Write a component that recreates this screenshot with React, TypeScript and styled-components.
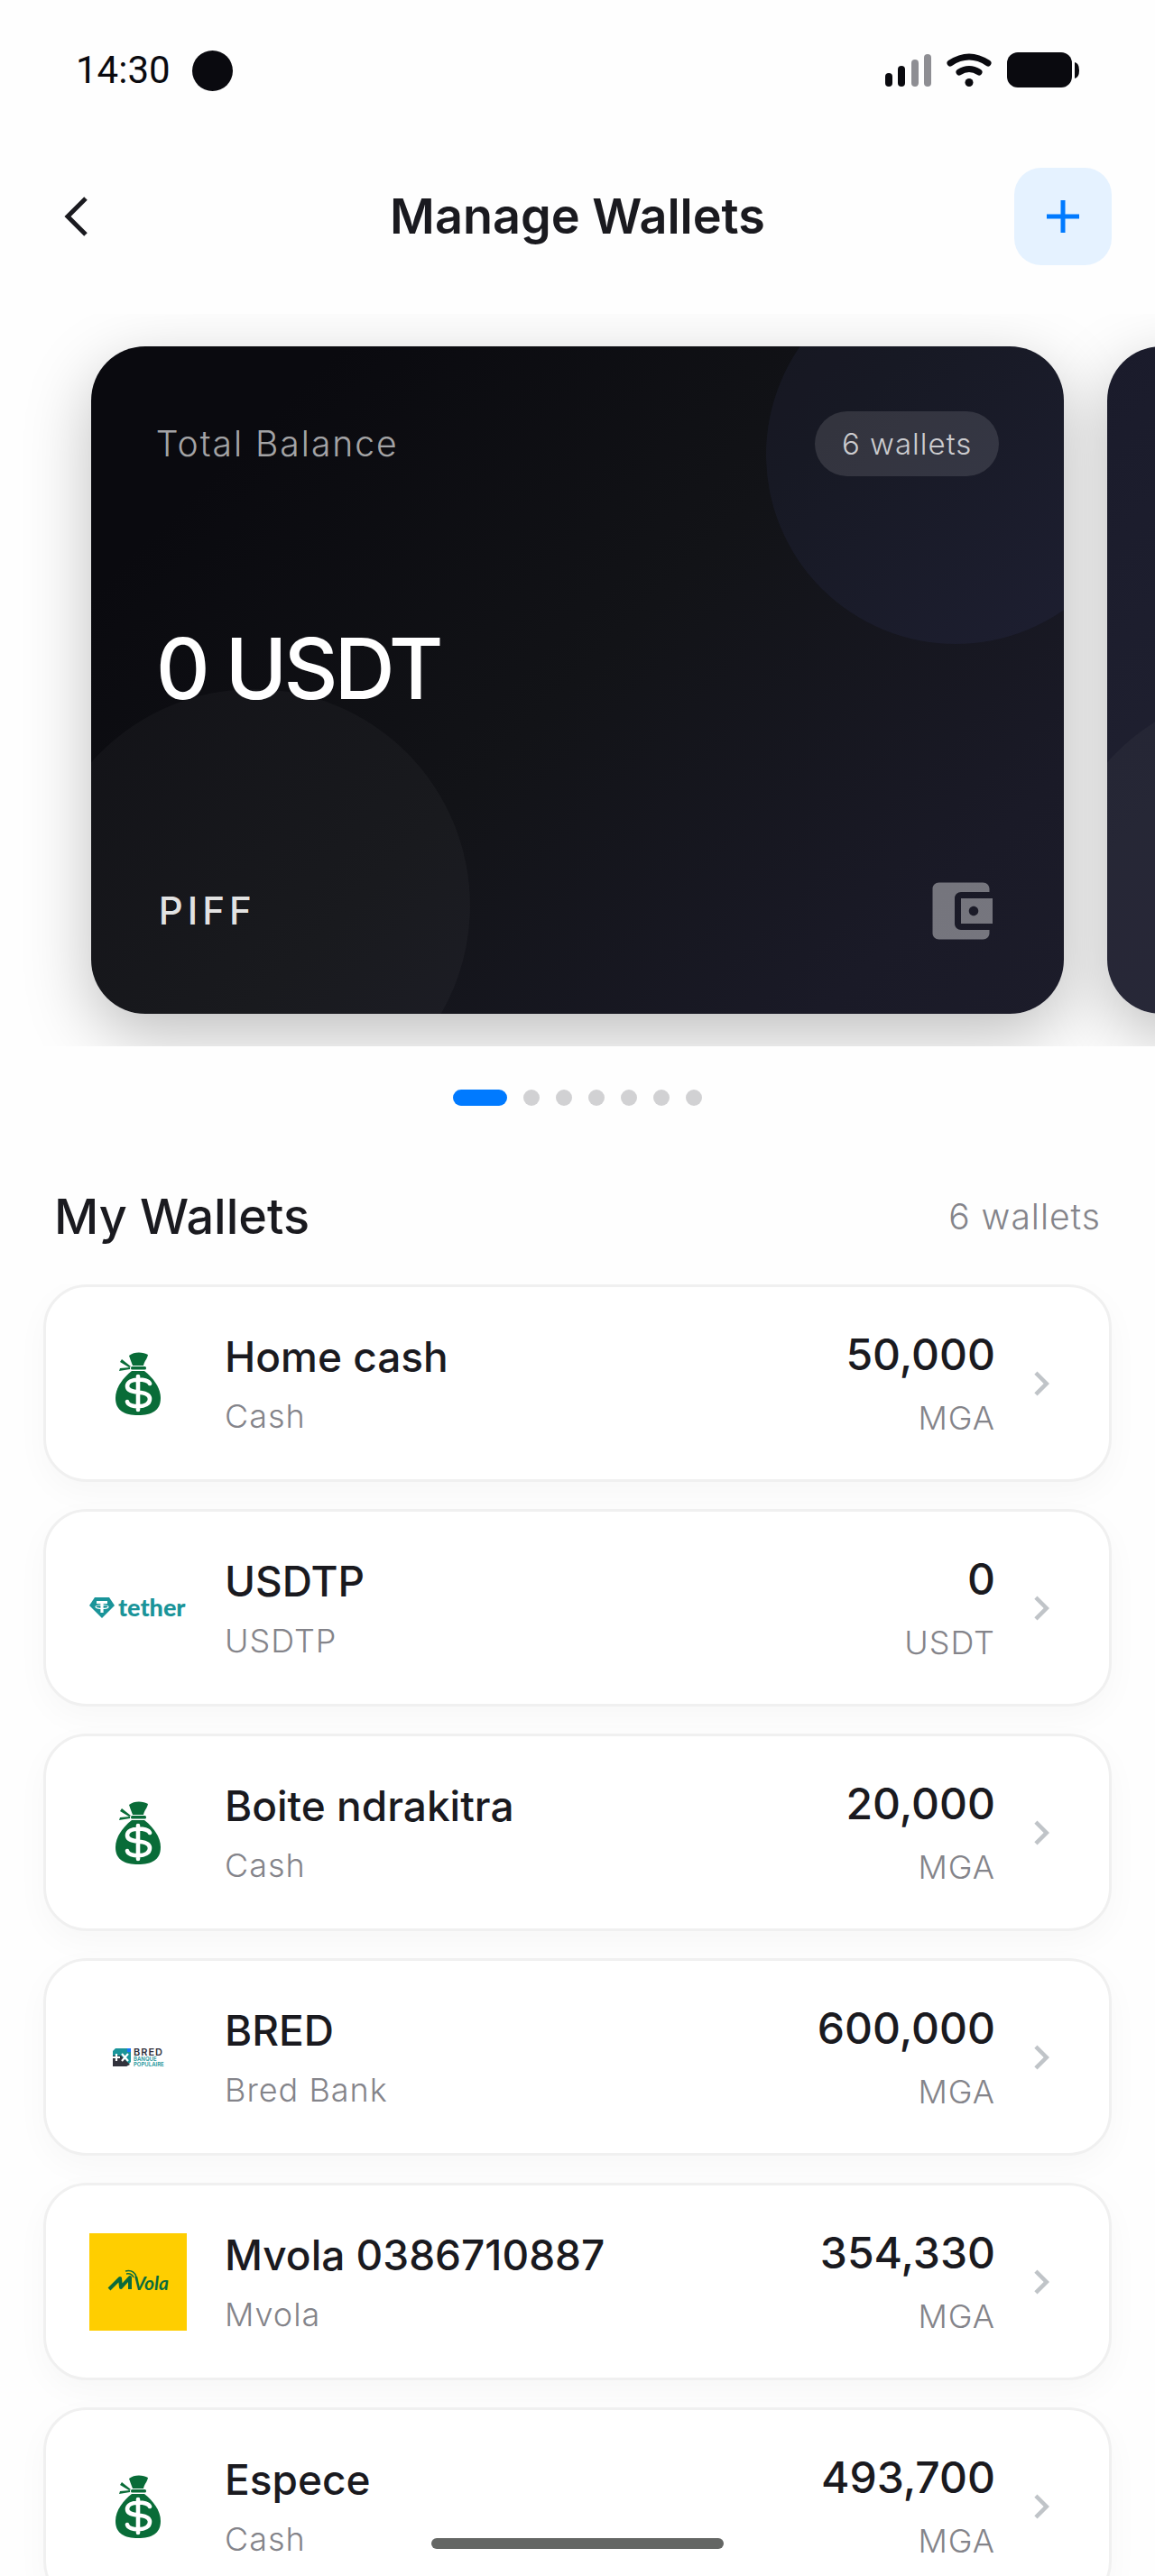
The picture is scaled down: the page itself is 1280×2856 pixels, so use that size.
import React from "react";
import styled, { createGlobalStyle, css } from "styled-components";

const GlobalStyle = createGlobalStyle`
  *, *::before, *::after { box-sizing: border-box; }
  body { margin: 0; background: #fefefe; }
  button { font: inherit; color: inherit; border: 0; padding: 0; background: none; cursor: pointer; }
`;

const Screen = styled.div`
  position: relative;
  display: flex;
  flex-direction: column;
  height: 100vh;
  overflow: hidden;
  background: #fefefe;
  color: #1a1a1f;
  font-family: Inter, "Liberation Sans", sans-serif;
`;

const StatusBar = styled.div`
  display: flex;
  align-items: center;
  justify-content: space-between;
  height: 156px;
  padding: 0 84px;
`;

const StatusGroup = styled.div`
  display: flex;
  align-items: center;
  gap: 24px;
  color: #0a0a0f;
`;

const Clock = styled.time`
  font-family: Roboto, sans-serif;
  font-size: 42px;
  line-height: 48px;
`;

const Camera = styled.span`
  width: 45px;
  height: 45px;
  border-radius: 50%;
  background: #0a0a0f;
`;

const Header = styled.header`
  display: grid;
  grid-template-columns: 108px 1fr 108px;
  align-items: center;
  padding: 30px 48px;
`;

const BackButton = styled.button`
  display: flex;
  width: 72px;
  height: 72px;
`;

const Title = styled.h1`
  margin: 0;
  font-size: 54px;
  line-height: 66px;
  font-weight: 600;
  text-align: center;
`;

const AddButton = styled.button`
  display: grid;
  place-items: center;
  width: 108px;
  height: 108px;
  border-radius: 30px;
  background: #e5f2ff;
`;

const Carousel = styled.section`
  display: flex;
  flex: none;
  margin-top: 24px;
  padding: 36px 6%;
  overflow: hidden;
`;

const Slide = styled.div`
  flex: none;
  width: 100%;
  padding: 0 24px;
`;

const BalanceCard = styled.article<{ $next?: boolean }>`
  position: relative;
  display: flex;
  flex-direction: column;
  justify-content: space-between;
  height: 740px;
  padding: 72px;
  border-radius: 60px;
  overflow: hidden;
  color: #fff;
  background: ${(p) =>
    p.$next
      ? "linear-gradient(135deg, #1a1b2b, #2a2b3a)"
      : "linear-gradient(135deg, #0a0a0f 0%, #0a0a0f 15%, #121317 50%, #1a1a27 85%, #1c1c2a 100%)"};
`;

const CardShadow = styled.div`
  border-radius: 60px;
  box-shadow: 0 24px 72px rgba(0, 0, 0, 0.25);
`;

const Bubble = styled.span<{ $corner: "top" | "bottom" }>`
  position: absolute;
  border-radius: 50%;
  ${(p) =>
    p.$corner === "top"
      ? css`
          top: -90px;
          right: -90px;
          width: 420px;
          height: 420px;
          background: rgba(120, 140, 255, 0.06);
        `
      : css`
          bottom: -120px;
          left: -60px;
          width: 480px;
          height: 480px;
          background: rgba(255, 255, 255, 0.03);
        `}
`;

const CardRow = styled.div`
  position: relative;
  display: flex;
  align-items: center;
  justify-content: space-between;
`;

const CardLabel = styled.span`
  font-size: 39px;
  line-height: 48px;
  font-weight: 300;
  letter-spacing: 2px;
  color: rgba(255, 255, 255, 0.65);
`;

const Pill = styled.span`
  padding: 18px 30px;
  border-radius: 36px;
  background: rgba(255, 255, 255, 0.12);
  color: rgba(255, 255, 255, 0.75);
  font-size: 33px;
  line-height: 36px;
  font-weight: 300;
  letter-spacing: 1px;
`;

const Balance = styled.strong`
  position: relative;
  padding-bottom: 14px;
  font-size: 93px;
  line-height: 116px;
  font-weight: 500;
  letter-spacing: -4px;
`;

const Brand = styled.span`
  padding-left: 3px;
  font-size: 42px;
  line-height: 48px;
  font-weight: 500;
  letter-spacing: 5px;
  color: rgba(255, 255, 255, 0.9);
`;

const WalletGlyph = styled.svg`
  width: 84px;
  height: 84px;
  fill: rgba(255, 255, 255, 0.4);
`;

const Dots = styled.div`
  display: flex;
  justify-content: center;
  gap: 18px;
  padding: 48px 0;
`;

const Dot = styled.button<{ $active: boolean }>`
  width: ${(p) => (p.$active ? 60 : 18)}px;
  height: 18px;
  border-radius: 9px;
  background: ${(p) => (p.$active ? "#007aff" : "#d1d1d3")};
`;

const SectionHead = styled.div`
  display: flex;
  align-items: center;
  justify-content: space-between;
  padding: 42px 60px;
`;

const SectionTitle = styled.h2`
  margin: 0;
  font-size: 54px;
  line-height: 66px;
  font-weight: 500;
`;

const Count = styled.span`
  font-size: 39px;
  line-height: 48px;
  font-weight: 300;
  letter-spacing: 1px;
  color: #84848a;
`;

const WalletList = styled.ul`
  display: flex;
  flex: 1;
  flex-direction: column;
  gap: 30px;
  min-height: 0;
  margin: 0;
  padding: 0 48px 30px;
  overflow: hidden auto;
  scrollbar-width: none;
  list-style: none;
`;

const WalletRow = styled.button`
  display: flex;
  align-items: center;
  width: 100%;
  height: 219px;
  padding: 0 48px;
  border: 3px solid #f0f0f0;
  border-radius: 48px;
  background: #fff;
  box-shadow: 0 12px 36px rgba(0, 0, 0, 0.03);
  text-align: left;
`;

const Logo = styled.span<{ $fill?: string }>`
  display: grid;
  flex: none;
  place-items: center;
  width: 108px;
  height: 108px;
  margin-right: 42px;
  background: ${(p) => p.$fill ?? "transparent"};
`;

const Lines = styled.span<{ $end?: boolean }>`
  display: flex;
  flex-direction: column;
  gap: ${(p) => (p.$end ? 10 : 6)}px;
  flex: ${(p) => (p.$end ? "none" : "1")};
  align-items: ${(p) => (p.$end ? "flex-end" : "flex-start")};
  padding-top: 6px;
`;

const Strong = styled.span`
  font-size: 46px;
  line-height: 60px;
  font-weight: 500;
`;

const Amount = styled(Strong)`
  font-size: 48px;
`;

const Muted = styled.span`
  font-size: 36px;
  line-height: 60px;
  font-weight: 300;
  letter-spacing: 1px;
  color: #84848a;
`;

const Chevron = styled.svg`
  flex: none;
  width: 54px;
  height: 54px;
  margin-left: 24px;
  fill: #c0c4c8;
`;

const HomeIndicator = styled.span`
  position: absolute;
  bottom: 30px;
  left: 50%;
  width: 324px;
  height: 12px;
  margin-left: -162px;
  border-radius: 6px;
  background: #646664;
`;

const MoneyBag = () => (
  <svg width="60" height="72" viewBox="0 0 60 72" fill="#096c38">
    <path d="M20 5C26 0 36 1 41 4C40 9 37 11 36 16H24C22 11 21 8 20 5Z" />
    <rect x="22" y="17" width="17" height="3.4" rx="1.5" />
    <path d="M12 9L22 17L20 18L10 12ZM10 19L21 18V20L9 22Z" />
    <path d="M23 22H37C46 29 55 40 55 52C55 66 45 71 30 71C15 71 5 66 5 52C5 40 14 29 23 22Z" />
    <path
      d="M43 36C41 30 18 29 18 39C18 49 43 42 43 53C43 64 19 63 18 56M30 28V65"
      fill="none"
      stroke="#fff"
      strokeWidth="4.6"
      strokeLinecap="round"
    />
  </svg>
);

const TetherLogo = () => (
  <svg width="108" height="36" viewBox="0 -5 108 36">
    <path d="M6 1H22L28 10L14 24L0 10Z" fill="#1a9499" />
    <path d="M8 5H20V8H15.600V18H12.400V8H8Z" fill="#fff" />
    <ellipse cx="14" cy="11.500" rx="7" ry="2" fill="none" stroke="#fff" strokeWidth="1.200" />
    <text x="32" y="21.500" fill="#1a9499" fontFamily="Lato, sans-serif" fontWeight="900" fontSize="27">
      tether
    </text>
  </svg>
);

const BredLogo = () => (
  <svg width="64" height="30" viewBox="-3 -4 64 30">
    <path d="M4 1H21V16L16 21H1V4Z" fill="#1a9499" />
    <path d="M1 9L10 9L20 19L16 21H1Z" fill="#32323c" />
    <path d="M17 1H21V5H17Z" fill="#1677ff" />
    <path d="M1 11H9M5 7V15M11 7L18 15M18 7L11 15" stroke="#fff" strokeWidth="2.200" />
    <text x="24" y="8.500" fill="#32323c" fontFamily="Inter, sans-serif" fontWeight="600" fontSize="11" letterSpacing="1">
      BRED
    </text>
    <text x="24" y="15" fill="#1a9499" fontFamily="Inter, sans-serif" fontWeight="600" fontSize="6">
      BANQUE
    </text>
    <text x="24" y="20.500" fill="#1a9499" fontFamily="Inter, sans-serif" fontWeight="600" fontSize="6">
      POPULAIRE
    </text>
  </svg>
);

const MvolaLogo = () => (
  <svg width="72" height="30" viewBox="-2 -1 72 30" fill="none" stroke="#0a6b3c">
    <path d="M2 22L14 10L15 20L25 9V22" strokeWidth="4" strokeLinejoin="round" />
    <path d="M21 5Q27 4 29 9M20 2Q29 0 32 8" strokeWidth="1.500" />
    <text x="29" y="23" fill="#0a6b3c" stroke="none" fontFamily="Lato, sans-serif" fontStyle="italic" fontWeight="700" fontSize="21">
      Vola
    </text>
  </svg>
);

const logos = {
  cash: { Art: MoneyBag, fill: undefined },
  tether: { Art: TetherLogo, fill: undefined },
  bred: { Art: BredLogo, fill: undefined },
  mvola: { Art: MvolaLogo, fill: "#ffce00" },
};

type Wallet = { name: string; kind: string; amount: string; unit: string; logo: keyof typeof logos };

const wallets: Wallet[] = [
  { name: "Home cash", kind: "Cash", amount: "50,000", unit: "MGA", logo: "cash" },
  { name: "USDTP", kind: "USDTP", amount: "0", unit: "USDT", logo: "tether" },
  { name: "Boite ndrakitra", kind: "Cash", amount: "20,000", unit: "MGA", logo: "cash" },
  { name: "BRED", kind: "Bred Bank", amount: "600,000", unit: "MGA", logo: "bred" },
  { name: "Mvola 0386710887", kind: "Mvola", amount: "354,330", unit: "MGA", logo: "mvola" },
  { name: "Espece", kind: "Cash", amount: "493,700", unit: "MGA", logo: "cash" },
];

const StatusIcons = () => (
  <svg width="216" height="42" viewBox="0 0 216 42" fill="#0a0a0f">
    <rect x="1" y="24" width="8" height="15" rx="4" />
    <rect x="15" y="16" width="8" height="23" rx="4" />
    <rect x="30" y="9" width="8" height="30" rx="4" fill="#8e8e93" />
    <rect x="44" y="3" width="8" height="36" rx="4" fill="#8e8e93" />
    <path d="M73 13Q94 -1 115 13M83 23Q94 16 105 23" fill="none" stroke="#0a0a0f" strokeWidth="7" strokeLinecap="round" />
    <circle cx="94" cy="34.500" r="4.500" />
    <rect x="136" y="1" width="72" height="39" rx="12" />
    <path d="M211 12Q216 13 216 21Q216 29 211 30Z" />
  </svg>
);

export default function App() {
  return (
    <>
      <GlobalStyle />
      <Screen>
        <StatusBar>
          <StatusGroup>
            <Clock>14:30</Clock>
            <Camera />
          </StatusGroup>
          <StatusIcons />
        </StatusBar>
        <Header>
          <BackButton aria-label="Back">
            <svg width="72" height="72" viewBox="0 0 72 72" fill="none" stroke="#1a1a1f" strokeWidth="5">
              <path d="M47 16L27 36L47 56" />
            </svg>
          </BackButton>
          <Title>Manage Wallets</Title>
          <AddButton aria-label="Add wallet">
            <svg width="36" height="36" viewBox="0 0 36 36" stroke="#007aff" strokeWidth="5">
              <path d="M18 0V36M0 18H36" />
            </svg>
          </AddButton>
        </Header>

        <Carousel aria-label="Balances">
          <Slide>
            <CardShadow>
              <BalanceCard>
                <Bubble $corner="top" />
                <Bubble $corner="bottom" />
                <CardRow>
                  <CardLabel>Total Balance</CardLabel>
                  <Pill>6 wallets</Pill>
                </CardRow>
                <Balance>0 USDT</Balance>
                <CardRow>
                  <Brand>PIFF</Brand>
                  <WalletGlyph viewBox="0 0 24 24">
                    <path d="M21 18v1c0 1.100-.9 2-2 2H5c-1.110 0-2-.9-2-2V5c0-1.100.89-2 2-2h14c1.100 0 2 .9 2 2v1h-9c-1.110 0-2 .9-2 2v8c0 1.100.89 2 2 2h9zm-9-2h10V8H12v8zm4-2.500c-.83 0-1.500-.67-1.500-1.500s.67-1.500 1.500-1.500 1.500.67 1.500 1.500-.67 1.500-1.500 1.500z" />
                  </WalletGlyph>
                </CardRow>
              </BalanceCard>
            </CardShadow>
          </Slide>
          <Slide>
            <CardShadow>
              <BalanceCard $next>
                <Bubble $corner="top" />
                <Bubble $corner="bottom" />
              </BalanceCard>
            </CardShadow>
          </Slide>
        </Carousel>

        <Dots>
          {Array.from({ length: 7 }, (_, i) => (
            <Dot key={i} $active={i === 0} aria-label={`Card ${i + 1}`} />
          ))}
        </Dots>

        <SectionHead>
          <SectionTitle>My Wallets</SectionTitle>
          <Count>6 wallets</Count>
        </SectionHead>

        <WalletList>
          {wallets.map((w) => {
            const { Art, fill } = logos[w.logo];
            return (
              <li key={w.name}>
                <WalletRow>
                  <Logo $fill={fill}>
                    <Art />
                  </Logo>
                  <Lines>
                    <Strong>{w.name}</Strong>
                    <Muted>{w.kind}</Muted>
                  </Lines>
                  <Lines $end>
                    <Amount>{w.amount}</Amount>
                    <Muted>{w.unit}</Muted>
                  </Lines>
                  <Chevron viewBox="0 0 24 24">
                    <path d="M8.590 16.590L13.170 12 8.590 7.410 10 6l6 6-6 6z" />
                  </Chevron>
                </WalletRow>
              </li>
            );
          })}
        </WalletList>
        <HomeIndicator />
      </Screen>
    </>
  );
}
